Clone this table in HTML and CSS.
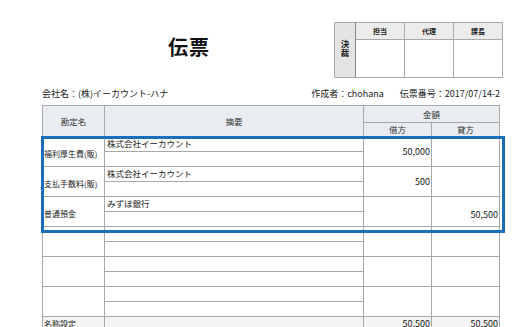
FILE: index.html
```html
<!DOCTYPE html>
<html lang="ja">
<head>
<meta charset="utf-8">
<link rel="stylesheet" href="styles.css">
</head>
<body>
<div class="page">
  <div class="top">
    <div class="title">伝票</div>
    <table class="stamp">
      <tr>
        <th class="side" rowspan="2"><span class="v">決裁</span></th>
        <th>担当</th><th>代理</th><th>課長</th>
      </tr>
      <tr><td></td><td></td><td></td></tr>
    </table>
  </div>
  <div class="info">
    <span>会社名：(株)イーカウント-ハナ</span>
    <span class="right"><span class="author">作成者：chohana</span><span>伝票番号：2017/07/14-2</span></span>
  </div>
  <div class="wrap">
    <table class="slip">
      <colgroup><col class="c1"><col class="c2"><col class="c3"><col class="c4"></colgroup>
      <tr class="h1"><th rowspan="2">勘定名</th><th rowspan="2">摘要</th><th colspan="2">金額</th></tr>
      <tr class="h2"><th>借方</th><th>貸方</th></tr>

      <tr class="s"><td class="acc" rowspan="2">福利厚生費(販)</td><td class="desc">株式会社イーカウント</td><td class="amt" rowspan="2">50,000</td><td class="amt" rowspan="2"></td></tr>
      <tr class="s"><td class="desc"></td></tr>

      <tr class="s"><td class="acc" rowspan="2">支払手数料(販)</td><td class="desc">株式会社イーカウント</td><td class="amt" rowspan="2">500</td><td class="amt" rowspan="2"></td></tr>
      <tr class="s"><td class="desc"></td></tr>

      <tr class="s"><td class="acc" rowspan="2">普通預金</td><td class="desc">みずほ銀行</td><td class="amt" rowspan="2"></td><td class="amt low" rowspan="2">50,500</td></tr>
      <tr class="s"><td class="desc"></td></tr>

      <tr class="s"><td class="acc" rowspan="2"></td><td class="desc"></td><td class="amt" rowspan="2"></td><td class="amt" rowspan="2"></td></tr>
      <tr class="s"><td class="desc"></td></tr>
      <tr class="s"><td class="acc" rowspan="2"></td><td class="desc"></td><td class="amt" rowspan="2"></td><td class="amt" rowspan="2"></td></tr>
      <tr class="s"><td class="desc"></td></tr>
      <tr class="s"><td class="acc" rowspan="2"></td><td class="desc"></td><td class="amt" rowspan="2"></td><td class="amt" rowspan="2"></td></tr>
      <tr class="s"><td class="desc"></td></tr>

      <tr class="total"><td class="acc">名称設定</td><td></td><td class="amt">50,500</td><td class="amt">50,500</td></tr>
    </table>
    <div class="highlight"></div>
  </div>
</div>
</body>
</html>
```
FILE: styles.css
```css
html, body { margin: 0; padding: 0; background: #fff; }
body {
  font-family: "Noto Sans CJK JP", "Noto Sans", sans-serif;
  font-size: 9px;
  color: #222;
}
.page { width: 520px; height: 327px; overflow: hidden; padding-left: 42px; box-sizing: border-box; }
.top { display: flex; align-items: flex-start; height: 88px; }
.title {
  width: 292px;
  box-sizing: border-box;
  padding-top: 32px;
  padding-left: 2px;
  text-align: center;
  font-size: 20px;
  font-weight: bold;
  color: #111;
  letter-spacing: 1px;
}
.stamp {
  margin-top: 22px;
  border-collapse: collapse;
  border: 1px solid #555;
}
.stamp th, .stamp td { border: 1px solid #aaa; padding: 0; }
.stamp th {
  background: #ececec;
  height: 16px;
  width: 48px;
  font-size: 7px;
  font-weight: bold;
  color: #222;
}
.stamp th.side {
  width: 17px;
  font-size: 8.5px;
  background: #e4e4e4;
  border-right: 1px solid #888;
}
.stamp .v {
  display: inline-block;
  writing-mode: vertical-rl;
  line-height: 10px;
  letter-spacing: 0.5px;
}
.stamp td { height: 37px; }
.info {
  display: flex;
  justify-content: space-between;
  width: 458px;
  font-size: 9px;
  line-height: 12px;
  height: 17px;
  color: #222;
}
.author { margin-right: 16px; }
.wrap { position: relative; width: 458px; }
.slip {
  border-collapse: collapse;
  table-layout: fixed;
  width: 458px;
}
.c1 { width: 62px; }
.c2 { width: 259px; }
.c3 { width: 68px; }
.c4 { width: 68px; }
.slip th, .slip td {
  border: 1px solid #a8a8a8;
  padding: 0 2px;
  font-weight: normal;
  white-space: nowrap;
  overflow: hidden;
}
.slip th { background: #e9edf1; color: #333; font-size: 8.5px; }
.slip tr.h1 th { height: 15px; }
.slip tr.h2 th { height: 13px; }
.slip tr.h1 th[rowspan] { height: 30px; }
.slip tr.s td { height: 14px; }
.slip td.acc {
  vertical-align: middle;
  padding: 4px 0 0 1px;
  font-size: 8px;
}
.slip td.desc { vertical-align: top; line-height: 12px; font-size: 8.5px; }
.slip td.amt { text-align: right; padding-right: 1px; }
.slip td.amt.low { padding-top: 6px; }
.slip tr.total td { background: #f4f4f4; height: 16px; vertical-align: top; line-height: 14px; padding-top: 0; }
.highlight {
  position: absolute;
  left: -1px;
  top: 31px;
  width: 458px;
  height: 91px;
  border: 3px solid #1a6fbd;
  box-sizing: content-box;
  pointer-events: none;
}
```
